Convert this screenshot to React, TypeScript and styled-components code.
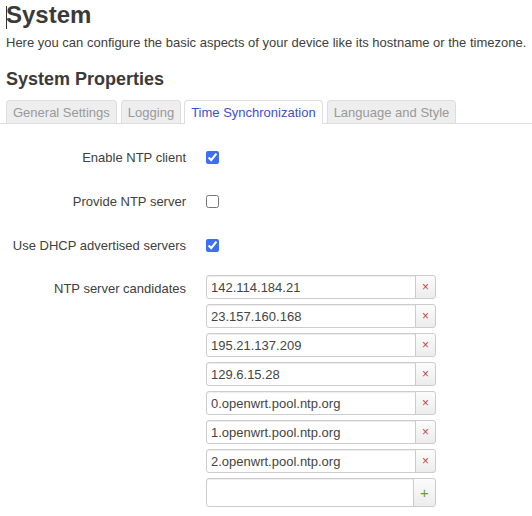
import styled, { createGlobalStyle } from 'styled-components';

const GlobalStyle = createGlobalStyle`
  html, body {
    margin: 0;
    padding: 0;
    background: #fff;
  }
  body {
    font-family: "Liberation Sans", Arial, sans-serif;
    font-size: 13px;
    color: #404040;
  }
`;

const Page = styled.div`
  width: 532px;
`;

const Header = styled.div`
  padding: 0 6px;
`;

const Title = styled.h2`
  margin: 0;
  font-size: 24px;
  line-height: 30px;
  font-weight: bold;
  color: #3a3a3a;
`;

const Caret = styled.span`
  display: inline-block;
  width: 1px;
  height: 23px;
  margin-right: -1px;
  background: #333;
  vertical-align: -6px;
`;

const Description = styled.p`
  margin: 4px 0 0;
  line-height: 18px;
  white-space: nowrap;
`;

const SectionTitle = styled.h3`
  margin: 16px 0 0;
  font-size: 18px;
  line-height: 22px;
  font-weight: bold;
  color: #3a3a3a;
`;

const TabBar = styled.ul`
  display: flex;
  gap: 4px;
  margin: 10px 0 0;
  padding: 0 0 0 6px;
  list-style: none;
  border-bottom: 1px solid #ddd;
`;

const Tab = styled.li<{ $active?: boolean }>`
  box-sizing: border-box;
  height: 23px;
  padding: 1px 6px 0;
  line-height: 22px;
  border: 1px solid #ddd;
  border-bottom: none;
  border-radius: 4px 4px 0 0;
  background: ${(p) => (p.$active ? '#fff' : '#eee')};
  color: ${(p) => (p.$active ? '#3d4fc9' : '#999')};
  ${(p) => p.$active && 'height: 24px; margin-bottom: -1px; margin-left: -1px;'}
`;

const Form = styled.div`
  margin-top: 11px;
  padding-left: 6px;
`;

const Row = styled.div<{ $top?: boolean }>`
  display: flex;
  align-items: ${(p) => (p.$top ? 'flex-start' : 'center')};
  min-height: 44px;
  gap: 20px;
  padding-top: ${(p) => (p.$top ? '8px' : '0')};
`;

const Label = styled.label<{ $top?: boolean }>`
  width: 180px;
  text-align: right;
  line-height: 18px;
  padding-top: ${(p) => (p.$top ? '5px' : '1px')};
`;

const Checkbox = styled.input`
  width: 13px;
  height: 13px;
  margin: 0;
  accent-color: #3d6ff2;
`;

const List = styled.div`
  display: flex;
  flex-direction: column;
  gap: 5px;
`;

const Group = styled.div<{ $empty?: boolean }>`
  display: flex;
  width: 230px;
  height: ${(p) => (p.$empty ? '29px' : '24px')};
`;

const TextInput = styled.input`
  box-sizing: border-box;
  flex: 1;
  min-width: 0;
  height: 100%;
  margin: 0;
  padding: 0 4px;
  border: 1px solid #ccc;
  border-radius: 3px 0 0 3px;
  box-shadow: inset 0 1px 1px rgba(0, 0, 0, 0.075);
  font-family: "Liberation Sans", Arial, sans-serif;
  font-size: 13px;
  color: #444;
  outline: none;
`;

const AddonButton = styled.button<{ $add?: boolean }>`
  box-sizing: border-box;
  width: ${(p) => (p.$add ? '23px' : '21px')};
  height: 100%;
  margin: 0 0 0 -1px;
  padding: 0;
  border: 1px solid #ccc;
  border-radius: 0 3px 3px 0;
  background: linear-gradient(to bottom, #fcfcfc, #ececec);
  font-family: "Liberation Sans", Arial, sans-serif;
  font-size: ${(p) => (p.$add ? '15px' : '12px')};
  font-weight: normal;
  line-height: 1;
  color: ${(p) => (p.$add ? '#6b9b3a' : '#c4473f')};
  cursor: pointer;
`;

const servers = [
  '142.114.184.21',
  '23.157.160.168',
  '195.21.137.209',
  '129.6.15.28',
  '0.openwrt.pool.ntp.org',
  '1.openwrt.pool.ntp.org',
  '2.openwrt.pool.ntp.org',
];

const tabs = ['General Settings', 'Logging', 'Time Synchronization', 'Language and Style'];

export default function App() {
  return (
    <Page>
      <GlobalStyle />
      <Header>
        <Title>
          <Caret />
          System
        </Title>
        <Description>
          Here you can configure the basic aspects of your device like its hostname or the timezone.
        </Description>
        <SectionTitle>System Properties</SectionTitle>
      </Header>

      <TabBar>
        {tabs.map((t) => (
          <Tab key={t} $active={t === 'Time Synchronization'}>
            {t}
          </Tab>
        ))}
      </TabBar>

      <Form>
        <Row>
          <Label>Enable NTP client</Label>
          <Checkbox type="checkbox" defaultChecked />
        </Row>
        <Row>
          <Label>Provide NTP server</Label>
          <Checkbox type="checkbox" />
        </Row>
        <Row>
          <Label>Use DHCP advertised servers</Label>
          <Checkbox type="checkbox" defaultChecked />
        </Row>
        <Row $top>
          <Label $top>NTP server candidates</Label>
          <List>
            {servers.map((s) => (
              <Group key={s}>
                <TextInput type="text" defaultValue={s} />
                <AddonButton>×</AddonButton>
              </Group>
            ))}
            <Group $empty>
              <TextInput type="text" defaultValue="" />
              <AddonButton $add>+</AddonButton>
            </Group>
          </List>
        </Row>
      </Form>
    </Page>
  );
}
